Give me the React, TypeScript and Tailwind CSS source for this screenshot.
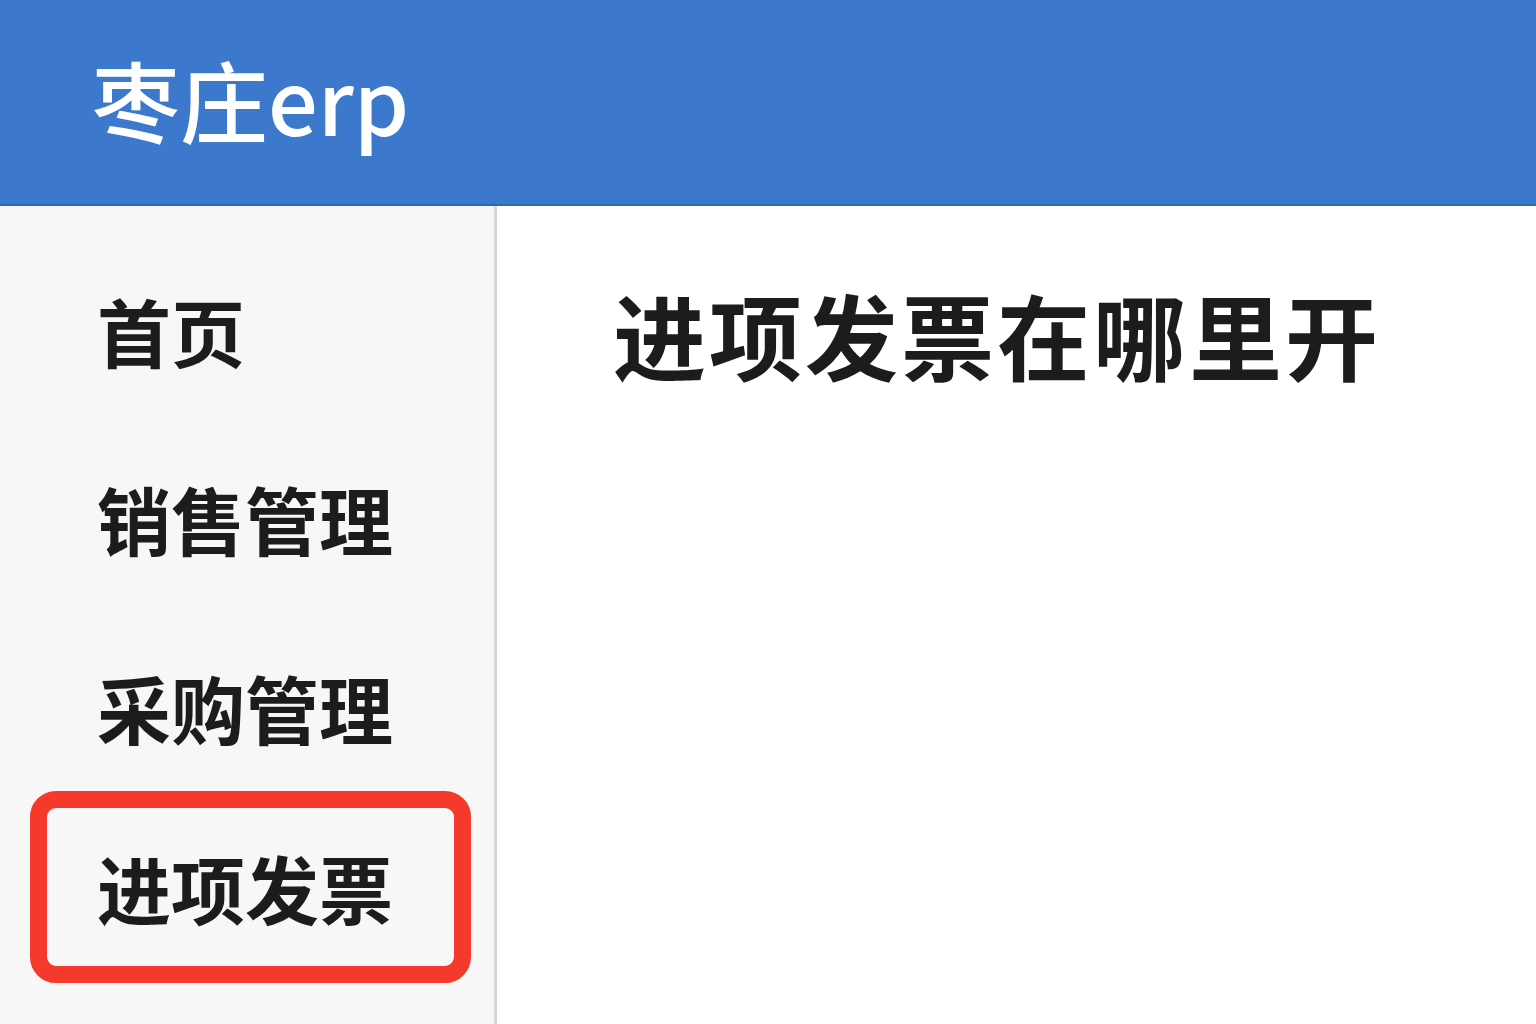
const menu = ['首页', '销售管理', '采购管理'];

export default function App() {
  return (
    <div
      className="w-[1536px] h-[1024px] overflow-hidden bg-white flex flex-col text-[#1c1c1c]"
      style={{ fontFamily: '"Noto Sans CJK SC", "Noto Sans", sans-serif' }}
    >
      {/* Header */}
      <header className="h-[206px] shrink-0 bg-[#3c79cd] border-b-2 border-[#2f67bd] flex items-center pl-[92px]">
        <h1 className="text-[88px] font-medium text-white leading-none pb-[8px]">枣庄erp</h1>
      </header>

      <div className="flex flex-1 min-h-0">
        {/* Sidebar */}
        <aside className="w-[497px] shrink-0 bg-[#f7f7f7] border-r-[3px] border-[#d8d8d8] pt-[30px]">
          {menu.map((item, i) => (
            <div
              key={item}
              className={`${i === 2 ? 'h-[179px] pt-[10px]' : 'h-[188px]'} flex items-center pl-[97px] text-[74px] font-bold leading-none`}
            >
              {item}
            </div>
          ))}
          <div className="ml-[30px] w-[441px] h-[192px] border-[17px] border-[#f5392a] rounded-[26px] flex items-center pl-[50px]">
            <span className="text-[74px] font-bold leading-none">进项发票</span>
          </div>
        </aside>

        {/* Main */}
        <main className="flex-1 pl-[116px] pt-[81px]">
          <h2 className="text-[93px] font-bold leading-none tracking-[3px]">进项发票在哪里开</h2>
        </main>
      </div>
    </div>
  );
}
